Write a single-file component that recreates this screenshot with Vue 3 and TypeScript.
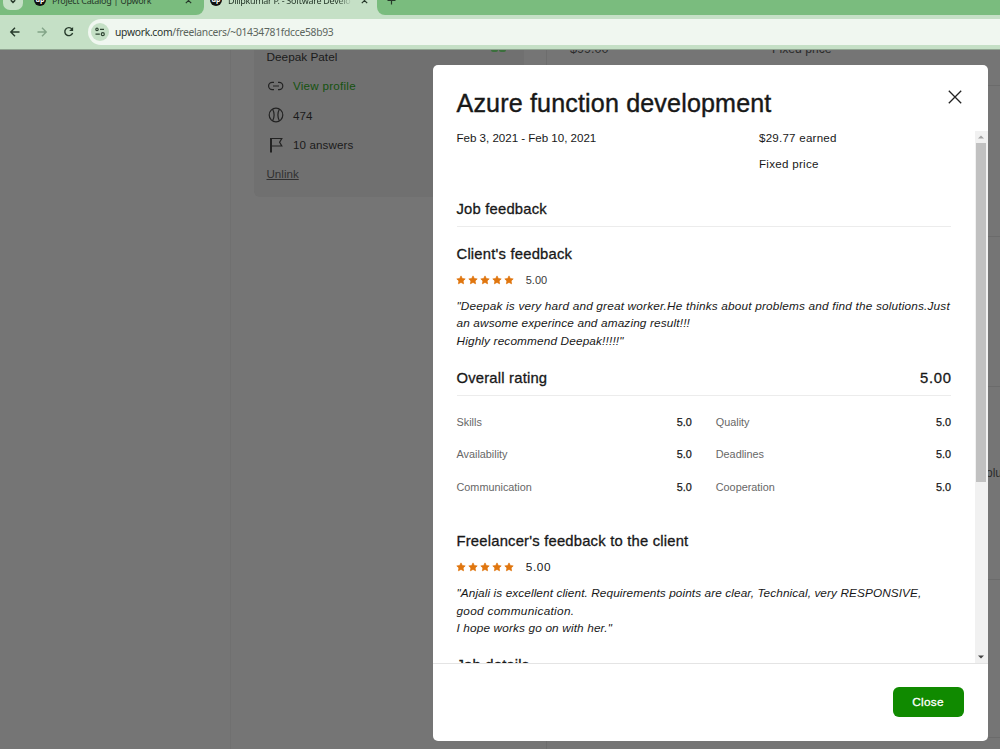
<script setup lang="ts">
interface Score { label: string; value: string }
const scores: Score[] = [
  { label: 'Skills', value: '5.0' },
  { label: 'Quality', value: '5.0' },
  { label: 'Availability', value: '5.0' },
  { label: 'Deadlines', value: '5.0' },
  { label: 'Communication', value: '5.0' },
  { label: 'Cooperation', value: '5.0' },
]
const star = 'M5 .9 6.3 3.5 9.2 3.9 7.1 5.9 7.6 8.8 5 7.4 2.4 8.8 2.9 5.9.8 3.9 3.7 3.5Z'
</script>

<template>
  <div class="screen">
    <header class="chrome">
      <div class="tabs">
        <div class="tab-search"><svg width="6" height="4" viewBox="0 0 6 4"><path d="M.8.2 3 2.4 5.2.2" fill="none" stroke="#26382a" stroke-width="1.5" /></svg></div>
        <div class="tab tab-first">
          <span class="fav">up</span><span class="tab-title">Project Catalog | Upwork</span>
          <svg class="x" width="7" height="7" viewBox="0 0 7 7"><path d="M.8.8 6.2 6.2M6.2.8.8 6.2" /></svg>
        </div>
        <div class="tab tab-active">
          <span class="fav">up</span><span class="tab-title fade">Dilipkumar P. - Software Develo</span>
          <svg class="x" width="7" height="7" viewBox="0 0 7 7"><path d="M.8.8 6.2 6.2M6.2.8.8 6.2" /></svg>
        </div>
        <div class="tab-rest"><svg class="x" width="9" height="9" viewBox="0 0 9 9"><path d="M4.5.5V8.5M.5 4.5H8.5" /></svg></div>
      </div>
      <div class="toolbar">
        <svg class="nav" width="12" height="12" viewBox="0 0 12 12"><path d="M10.5 6H2M6 1.8 1.8 6 6 10.2" stroke="#263a2b" /></svg>
        <svg class="nav" width="12" height="12" viewBox="0 0 12 12"><path d="M1.5 6H10M6 1.8 10.2 6 6 10.2" stroke="#83a488" /></svg>
        <svg class="nav" width="12" height="12" viewBox="0 0 12 12"><path d="M9 3.2A4 4 0 1 0 9.6 7" stroke="#263a2b" /><path d="M10.1 1V5H6.1Z" fill="#263a2b" /></svg>
        <div class="address">
          <span class="site"><svg width="12" height="12" viewBox="0 0 12 12" fill="none" stroke="#2f4433" stroke-width="1.2"><circle cx="3" cy="3.4" r="1.2" /><path d="M6 3.4H10M1.5 8.2H5.8" /><circle cx="8.8" cy="8.2" r="1.5" /></svg></span>
          <span class="url"><b>upwork.com</b>/freelancers/~01434781fdcce58b93</span>
        </div>
      </div>
    </header>

    <main class="page">
      <div class="gutter"></div>
      <aside class="side">
        <div class="profile">
          <p class="name">Deepak Patel</p>
          <p class="row"><svg width="17" height="16" viewBox="0 0 17 16"><path d="M7 4.4H5.2A3.6 3.6 0 0 0 5.2 11.6H7M11 4.4H12.2A3.6 3.6 0 0 1 12.2 11.6H11M6 8H12" /></svg><span class="link">View profile</span></p>
          <p class="row"><svg width="17" height="16" viewBox="0 0 17 16"><circle cx="9" cy="8" r="6.8" /><path d="M5.6 2.2C7.6 5.5 7.6 10.5 5.6 13.8M12.4 2.2C10.4 5.5 10.4 10.5 12.4 13.8" /></svg><span>474</span></p>
          <p class="row"><svg width="17" height="16" viewBox="0 0 17 16"><path d="M4.2 1.5H14.8L12.6 5.2 14.8 9H4.2" /><path d="M4 1V15.4" stroke-width="2" /></svg><span class="answers">10 answers</span></p>
          <p class="unlink">Unlink</p>
        </div>
      </aside>
      <section class="jobs">
        <span class="price">$99.00</span><span class="kind">Fixed price</span>
        <span class="dots"><i></i><i></i></span>
        <i class="rule r1"></i><i class="rule r2"></i><i class="rule r3"></i><i class="rule r4"></i><i class="rule r5"></i>
        <span class="edge-text">olu</span>
      </section>
    </main>

    <div class="modal" role="dialog">
      <div class="head">
        <h1>Azure function development</h1>
        <svg width="14" height="14" viewBox="0 0 14 14"><path d="M.8.8 13.2 13.2M13.2.8.8 13.2" fill="none" stroke="#222" stroke-width="1.3" /></svg>
      </div>
      <div class="body">
        <div class="content">
          <div class="summary">
            <span class="dates">Feb 3, 2021 - Feb 10, 2021</span>
            <div><p class="earned">$29.77 earned</p><p class="fixed">Fixed price</p></div>
          </div>
          <h2 class="ruled">Job feedback</h2>
          <h2 class="client">Client's feedback</h2>
          <div class="stars"><svg v-for="n in 5" :key="n" width="10" height="10" viewBox="0 0 10 10"><path :d="star" /></svg><span class="light">5.00</span></div>
          <blockquote><span class="wide">"Deepak is very hard and great worker.He thinks about problems and find the solutions.Just</span><span>an awsome experince and amazing result!!!</span><span>Highly recommend Deepak!!!!!"</span></blockquote>
          <h2 class="ruled overall"><span>Overall rating</span><span class="total">5.00</span></h2>
          <div class="scores"><div v-for="s in scores" :key="s.label"><span>{{ s.label }}</span><b>{{ s.value }}</b></div></div>
          <h2 class="freelancer">Freelancer's feedback to the client</h2>
          <div class="stars"><svg v-for="n in 5" :key="n" width="10" height="10" viewBox="0 0 10 10"><path :d="star" /></svg><span>5.00</span></div>
          <blockquote class="reply"><span class="tight">"Anjali is excellent client. Requirements points are clear, Technical, very RESPONSIVE,</span><span class="short">good communication.</span><span>I hope works go on with her."</span></blockquote>
          <h2 class="details">Job details</h2>
        </div>
        <div class="scroll">
          <svg width="6" height="4" viewBox="0 0 6 4"><path d="M0 3.5 3 .5 6 3.5Z" fill="#a3a3a3" /></svg>
          <div class="thumb"></div>
          <svg width="6" height="4" viewBox="0 0 6 4"><path d="M0 .5 3 3.5 6 .5Z" fill="#444" /></svg>
        </div>
      </div>
      <footer><button>Close</button></footer>
    </div>
  </div>
</template>

<style>
body { margin: 0; overflow: hidden; }
</style>

<style scoped>
* { box-sizing: border-box; }
p, h1, h2, blockquote { margin: 0; font-weight: 400; }
svg { display: block; flex: none; }
.screen { position: relative; width: 1000px; height: 749px; overflow: hidden; background: #757575; font-family: "Liberation Sans", Arial, sans-serif; color: #181818; display: flex; flex-direction: column; }
.chrome { height: 50px; flex: none; background: #c5e0c6; border-bottom: 1px solid #91a592; font-family: "Noto Sans", "Open Sans", sans-serif; }
.tabs { height: 15px; display: flex; overflow: hidden; }
.tab-search { width: 20px; height: 10px; margin-left: 3px; border-radius: 0 0 7px 7px; background: #c5e0c6; display: flex; justify-content: center; box-shadow: 0 0 0 20px #7abc7e; z-index: 0; }
.tab { height: 15px; display: flex; position: relative; }
.tab-first { width: 181px; background: #7abc7e; border-radius: 0 0 8px 0; padding-left: 11px; z-index: 1; }
.tab-active { width: 173px; padding-left: 6px; }
.tab-rest { flex: 1; background: #7abc7e; border-radius: 0 0 0 8px; padding-left: 10px; }
.fav { width: 12px; height: 12px; margin-top: -6px; border-radius: 50%; background: #111; color: #fff; font-size: 7px; line-height: 11px; text-align: center; font-weight: 700; }
.tab-title { margin: -5px 0 0 6px; font-size: 9px; letter-spacing: -.31px; line-height: 12px; color: #26382a; white-space: nowrap; width: 124px; overflow: hidden; }
.tab-first .tab-title { width: 133px; }
.fade { -webkit-mask-image: linear-gradient(90deg, #000 88%, transparent); mask-image: linear-gradient(90deg, #000 88%, transparent); }
.x { margin-top: -3px; fill: none; stroke: #26382a; stroke-width: 1.2; }
.tab-active .x { margin-left: 9px; }
.tab-rest .x { margin-top: -4px; }
.toolbar { height: 34px; display: flex; align-items: center; padding-left: 9px; gap: 15px; }
.nav { fill: none; stroke-width: 1.4; }
.address { flex: 1; height: 26px; margin: 0 0 0 -2px; border-radius: 13px 0 0 13px; background: #f0f7f0; display: flex; align-items: center; padding-left: 3px; }
.site { width: 18px; height: 18px; border-radius: 50%; background: #c5e0c6; display: flex; align-items: center; justify-content: center; }
.url { margin-left: 6px; font-size: 10.3px; letter-spacing: -.28px; color: #5c665e; white-space: nowrap; }
.url b { font-weight: 400; color: #29342b; }

.page { flex: 1; display: flex; overflow: hidden; }
.gutter { width: 231px; border-right: 1px solid #707070; }
.side { width: 316px; padding-left: 23px; border-right: 1px solid #6d6d6d; }
.profile { height: 147px; width: 270px; background: #707070; border-radius: 0 0 6px 6px; padding-left: 12.5px; font-size: 11.6px; color: #1b1b1b; }
.name { height: 21px; line-height: 15px; font-size: 11.8px; }
.row { display: flex; align-items: center; height: 29.5px; gap: 9.5px; }
.row svg { fill: none; stroke: #222; stroke-width: 1.2; }
.link { color: #14520f; letter-spacing: .26px; }
.answers { letter-spacing: .1px; }
.unlink { line-height: 28px; text-decoration: underline; color: #303030; font-size: 11.6px; }
.jobs { position: relative; flex: 1; }
.price, .kind { position: absolute; top: -8px; left: 23px; font-size: 12.6px; line-height: 14px; color: #2b2b2b; }
.kind { left: 225px; font-size: 12.2px; }
.dots { position: absolute; left: -56px; top: 0; display: flex; gap: 1px; }
.dots i { width: 7px; height: 2px; border-radius: 0 0 3px 3px; background: #3b703c; }
.rule { position: absolute; left: 440px; right: 0; height: 1px; background: #6b6b6b; }
.r1 { top: 35px; } .r2 { top: 186px; } .r3 { top: 336px; } .r4 { top: 529px; } .r5 { top: 687px; }
.edge-text { position: absolute; left: 439px; top: 416px; font-size: 12px; color: #2b2b2b; }

.modal { position: absolute; left: 433px; top: 65px; width: 554.5px; height: 676px; border-radius: 5px; background: #fff; overflow: hidden; display: flex; flex-direction: column; }
.head { height: 66px; flex: none; padding: 21px 26px 0 23.5px; display: flex; justify-content: space-between; }
.head svg { margin-top: 4px; }
h1 { font-size: 25.1px; line-height: 34px; letter-spacing: .15px; -webkit-text-stroke: .4px #181818; }
.body { flex: none; height: 532px; display: flex; overflow: hidden; }
.content { width: 541.5px; padding: 0 23.5px; margin-top: -1px; }
.content h2 { font-size: 14.8px; line-height: 20px; letter-spacing: .2px; -webkit-text-stroke: .3px #181818; white-space: nowrap; }
.summary { display: flex; font-size: 11.6px; line-height: 16px; height: 69px; letter-spacing: -.03px; }
.dates { width: 302.5px; }
.earned { letter-spacing: .22px; }
.fixed { margin-top: 10px; letter-spacing: .28px; }
.content .ruled { height: 28px; border-bottom: 1px solid #ececec; display: flex; justify-content: space-between; }
.client { margin-top: 17px; }
.content .total { font-size: 14.8px; letter-spacing: .7px; margin-right: -.7px; }
.stars { display: flex; gap: 1.9px; height: 14px; align-items: center; margin: 9px 0 0 -.5px; font-size: 11.8px; letter-spacing: .6px; }
.stars path { fill: #e0760f; stroke: #e0760f; stroke-width: .7; stroke-linejoin: round; }
.stars span { margin-left: 10.3px; }
.stars .light { font-size: 11px; color: #3a3a3a; letter-spacing: 0; }
blockquote { margin-top: 10.6px; font-size: 11.8px; letter-spacing: .145px; line-height: 17.8px; font-style: italic; white-space: nowrap; }
blockquote span { display: block; }
.wide { letter-spacing: .18px; }
.tight { letter-spacing: .093px; }
.short { letter-spacing: .3px; }
.content .overall { margin-top: 17.4px; }
.scores { margin-top: 9px; display: grid; grid-template-columns: 1fr 1fr; column-gap: 24px; grid-auto-rows: 32.5px; font-size: 10.85px; }
.scores div { display: flex; align-items: center; justify-content: space-between; color: #676767; }
.scores b { font-weight: 400; color: #181818; -webkit-text-stroke: .25px #181818; }
.freelancer { margin-top: 28px; }
.reply { margin-top: 10.8px; line-height: 17.9px; }
.details { margin-top: 16.5px; }
.scroll { width: 13px; background: #f1f1f1; display: flex; flex-direction: column; align-items: center; padding: 4px 0; }
.thumb { width: 10px; height: 339px; background: #c1c1c1; margin: 4px 0 auto; flex: none; }
footer { flex: 1; border-top: 1px solid #e4e4e4; display: flex; justify-content: flex-end; padding: 23px 24px 0 0; }
button { width: 71px; height: 30px; border: 0; border-radius: 6px; background: #108a00; color: #fff; font: 11.8px "Liberation Sans", Arial, sans-serif; letter-spacing: .25px; -webkit-text-stroke: .3px #fff; }
</style>
